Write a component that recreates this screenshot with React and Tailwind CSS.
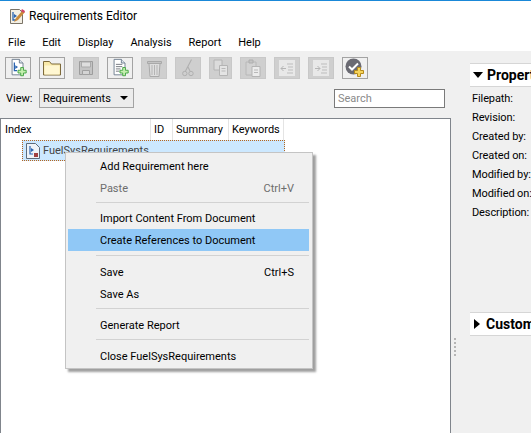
const FONT = { fontFamily: 'Roboto, "Noto Sans", sans-serif' };

function Plus({ color = "#3fa33f", light = "#c6efb0" }) {
  return (
    <g>
      <path d="M14 9.5h3v3h3v3h-3v3h-3v-3h-3v-3h3z" fill={light} stroke={color} strokeWidth="1" />
    </g>
  );
}

function DocBase({ children }) {
  return (
    <svg width="20" height="20" viewBox="0 0 22 20">
      <path d="M4.5 .5h8l4 4v13h-12z" fill="#fff" stroke="#6b7b8c" />
      <path d="M12.5 .5v4h4" fill="#dfe6ee" stroke="#6b7b8c" />
      {children}
    </svg>
  );
}

const IconNewSet = () => (
  <DocBase>
    <path d="M7 4v9h3" fill="none" stroke="#2a64b0" strokeWidth="1.4" />
    <path d="M8 7l3 2-3 2z" fill="#2a64b0" />
    <Plus />
  </DocBase>
);
const IconFolder = () => (
  <svg width="20" height="18" viewBox="0 0 20 18">
    <path d="M1.5 2.5h6l2 2.5h9v11h-17z" fill="#f9e9a8" stroke="#7d6a3c" />
    <path d="M2.5 6.5h15v9h-15z" fill="#fff7d2" />
  </svg>
);
const IconSave = () => (
  <svg width="16" height="16" viewBox="0 0 16 16">
    <path d="M1.5 1.5h13v13h-13z" fill="#c4c4c4" stroke="#9d9d9d" />
    <path d="M3.5 2h9v5h-9z" fill="#dedede" stroke="#aaa" />
    <path d="M4.5 10.5h7v4h-7z" fill="#d4d4d4" stroke="#a0a0a0" />
  </svg>
);
const IconNewReq = () => (
  <DocBase>
    <path d="M6.5 6h7M6.5 8.5h7M6.5 11h5M6.5 13.5h4" stroke="#6d7278" />
    <Plus />
  </DocBase>
);
const IconTrash = () => (
  <svg width="15" height="18" viewBox="0 0 15 18">
    <path d="M.5 2.5h14v2H.5z" fill="#c4c4c4" stroke="#a9a9a9" />
    <path d="M2 4.5h11l-1 13H3z" fill="#dedede" stroke="#a9a9a9" />
    <path d="M5 6v10M7.5 6v10M10 6v10" stroke="#b4b4b4" />
  </svg>
);
const IconCut = () => (
  <svg width="12" height="18" viewBox="0 0 12 18">
    <path d="M9.5 .5L3.5 12M6 8l2 4" stroke="#b0b0b0" strokeWidth="1.1" fill="none" />
    <circle cx="2.8" cy="14.5" r="2.2" fill="none" stroke="#b0b0b0" />
    <circle cx="9" cy="14.5" r="2.2" fill="none" stroke="#b0b0b0" />
  </svg>
);
const IconCopy = () => (
  <svg width="16" height="18" viewBox="0 0 16 18">
    <path d="M1 1h8v10H1z" fill="#dcdcdc" stroke="#b4b4b4" />
    <path d="M6.5 6.5h8v10h-8z" fill="#e4e4e4" stroke="#b4b4b4" />
    <path d="M8.5 9.5h4M8.5 12h4" stroke="#b8b8b8" />
  </svg>
);
const IconPaste = () => (
  <svg width="16" height="18" viewBox="0 0 16 18">
    <path d="M1 3h10v13H1z" fill="#d2d2d2" stroke="#b8b8b8" />
    <path d="M4 1h4v3H4z" fill="#c4c4c4" stroke="#aeaeae" />
    <path d="M7 7.5h8v10H7z" fill="#ececec" stroke="#b4b4b4" />
    <path d="M9 11h4M9 13.5h4" stroke="#b8b8b8" />
  </svg>
);
const IconOutdent = () => (
  <svg width="16" height="16" viewBox="0 0 16 16">
    <path d="M0 0h16v16H0z" fill="#e8e8e8" />
    <path d="M8 4h6M9 7h5M9 10h5M8 13h6" stroke="#bdbdbd" />
    <path d="M7 8.5H2M4.5 6L2 8.5 4.5 11" fill="none" stroke="#b5b5b5" />
  </svg>
);
const IconIndent = () => (
  <svg width="16" height="16" viewBox="0 0 16 16">
    <path d="M0 0h16v16H0z" fill="#e8e8e8" />
    <path d="M8 4h6M9 7h5M9 10h5M8 13h6" stroke="#bdbdbd" />
    <path d="M2 8.5h5M4.5 6L7 8.5 4.5 11" fill="none" stroke="#b5b5b5" />
  </svg>
);
const IconCheck = () => (
  <svg width="20" height="20" viewBox="0 0 20 20">
    <circle cx="8.5" cy="8.5" r="8" fill="#6a6a72" />
    <path d="M4 8.5l3 3 6-6" fill="none" stroke="#fff" strokeWidth="2" />
    <path d="M12.5 9.5h3v3h3v3h-3v3h-3v-3h-3v-3h3z" fill="#f6d45a" stroke="#b58a1c" />
  </svg>
);

function ToolButton({ children, off, w = "w-[26px]" }) {
  return (
    <div
      className={`${w} h-[22px] flex items-center justify-center border ${
        off ? "bg-[#cfcfcf] border-[#c8c8c8]" : "bg-[#f0f0f0] border-[#a3a3a3]"
      }`}
    >
      {children}
    </div>
  );
}

function MenuItem({ label, shortcut, disabled, active }) {
  return (
    <div
      className={`h-[22px] flex items-center justify-between pt-[2px] pl-[32px] pr-[15px] ${
        active ? "bg-[#90c8f6]" : ""
      } ${disabled ? "text-[#6d6d6d]" : "text-black"}`}
    >
      <span>{label}</span>
      {shortcut && <span>{shortcut}</span>}
    </div>
  );
}

const Sep = ({ className = "" }) => <div className={`h-px bg-[#d2d2d2] ml-[28px] ${className}`} />;

export default function App() {
  return (
    <div
      className="relative w-[531px] h-[433px] overflow-hidden bg-white text-[11px] text-black flex flex-col"
      style={FONT}
    >
      <div className="h-px bg-[#1a88d8] shrink-0" />
      <div className="h-[30px] shrink-0 flex items-center pl-[9px] gap-[4px] text-[12px]">
        <svg width="16" height="16" viewBox="0 0 16 16">
          <path d="M1.5 1.5h9l3 3v11h-12z" fill="#f3efe4" stroke="#7b7468" />
          <path d="M4 4v8h3" fill="none" stroke="#2a64b0" strokeWidth="1.3" />
          <path d="M5 6l3 2-3 2z" fill="#2a64b0" />
          <path d="M5 14l2-4 7-8 2 2-7 8z" fill="#c98a3a" />
          <path d="M13 1l3 2-1 2-3-2z" fill="#d2456a" />
        </svg>
        <span>Requirements Editor</span>
      </div>
      <div className="h-[20px] shrink-0 flex items-center pt-[4px] pl-[8px] gap-[17px]">
        <span>File</span>
        <span>Edit</span>
        <span>Display</span>
        <span>Analysis</span>
        <span>Report</span>
        <span>Help</span>
      </div>
      <div className="flex-1 bg-[#f0f0f0] flex min-h-0">
        <div className="w-[451px] shrink-0 flex flex-col">
          <div className="flex gap-2 pl-[5px] pt-[6px]">
            <ToolButton><IconNewSet /></ToolButton>
            <ToolButton><IconFolder /></ToolButton>
            <ToolButton off><IconSave /></ToolButton>
            <ToolButton><IconNewReq /></ToolButton>
            <ToolButton off><IconTrash /></ToolButton>
            <ToolButton off><IconCut /></ToolButton>
            <ToolButton off w="w-[23px]"><IconCopy /></ToolButton>
            <ToolButton off><IconPaste /></ToolButton>
            <ToolButton off><IconOutdent /></ToolButton>
            <ToolButton off><IconIndent /></ToolButton>
            <ToolButton><IconCheck /></ToolButton>
          </div>
          <div className="flex items-center mt-[9px] pl-[6px] h-[20px]">
            <span className="w-[33px] pt-[2px]">View:</span>
            <div className="w-[95px] h-[20px] border border-[#a3a3a3] bg-[#ececec] flex items-center justify-between pl-[3px] pr-[5px]">
              <span className="pt-[2px]">Requirements</span>
              <svg width="8" height="4" viewBox="0 0 8 4"><path d="M0 0h8L4 4z" fill="#000" /></svg>
            </div>
            <div className="ml-[200px] w-[111px] h-[19px] border border-[#7a7a7a] bg-white flex items-center pt-[2px] pl-[3px] text-[#8a8a8a]">
              Search
            </div>
          </div>
          <div className="flex-1 mt-[10px] bg-white border border-[#80858c] border-b-0 w-[451px] min-h-0">
            <div className="flex h-[21px] items-center">
              <div className="w-[149px] pt-[2px] pl-[4px] h-full flex items-center">Index</div>
              <div className="w-[22px] pt-[2px] pl-[3px] h-full flex items-center border-l border-[#e4e4e4]">ID</div>
              <div className="w-[56px] pt-[2px] pl-[3px] h-full flex items-center border-l border-[#e4e4e4]">Summary</div>
              <div className="w-[56px] pt-[2px] pl-[3px] h-full flex items-center border-x border-[#e4e4e4]">Keywords</div>
            </div>
            <div className="ml-[21px] w-[263px] h-[21px] bg-[#cce8ff] border border-dotted border-[#b5651d] flex items-center pl-[3px] gap-[3px] text-[#444]">
              <svg width="14" height="16" viewBox="0 0 14 16">
                <path d="M.5 .5h9l4 4v11H.5z" fill="#eef3f8" stroke="#5b6b7c" />
                <path d="M4 3v8h3" fill="none" stroke="#2a64b0" strokeWidth="1.2" />
                <path d="M5 5l3 2-3 2z" fill="#2a64b0" />
                <path d="M8 10h4v4H8z" fill="#a04040" />
              </svg>
              <span className="pt-[2px]">FuelSysRequirements</span>
            </div>
          </div>
        </div>
        <div className="flex-1 min-w-0 flex">
          <div className="w-[19px] shrink-0 flex items-end pb-[77px] pl-[3px]">
            <div className="w-[3px] h-[18px] border-l-2 border-dotted border-[#b5b5b5]" />
          </div>
          <div className="flex-1 min-w-0 overflow-hidden pt-[12px] flex flex-col whitespace-nowrap">
            <div className="h-[24px] bg-white border-y border-[#d6d6d6] flex items-center pl-[3px] gap-[4px] font-bold text-[14px]">
              <svg width="10" height="6" viewBox="0 0 10 6" className="shrink-0"><path d="M0 0h10L5 6z" fill="#000" /></svg>
              <span>Properties</span>
            </div>
            <div className="pl-[2px] pt-[3px] flex flex-col tracking-[-0.1px]">
              {["Filepath:", "Revision:", "Created by:", "Created on:", "Modified by:", "Modified on:", "Description:"].map((t) => (
                <div key={t} className="h-[19px] flex items-center">{t}</div>
              ))}
            </div>
            <div className="mt-[89px] h-[24px] bg-white border-y border-[#d6d6d6] flex items-center pl-[4px] gap-[6px] font-bold text-[14px]">
              <svg width="6" height="10" viewBox="0 0 6 10" className="shrink-0"><path d="M0 0v10l6-5z" fill="#000" /></svg>
              <span>Custom Attributes</span>
            </div>
          </div>
        </div>
      </div>

      <div className="absolute left-[65px] top-[152px] w-[248px] h-[217px] bg-[#f0f0f0] border border-[#c4c4c4] shadow-[3px_3px_2px_rgba(80,80,80,0.55)] pt-[2px] pl-[2px] pr-[3px]">
        <MenuItem label="Add Requirement here" />
        <MenuItem label="Paste" shortcut="Ctrl+V" disabled />
        <Sep className="mt-[3px] mb-[4px]" />
        <MenuItem label="Import Content From Document" />
        <MenuItem label="Create References to Document" active />
        <Sep className="mt-[4px] mb-[5px]" />
        <MenuItem label="Save" shortcut="Ctrl+S" />
        <MenuItem label="Save As" />
        <Sep className="mt-[3px] mb-[5px]" />
        <MenuItem label="Generate Report" />
        <Sep className="mt-[3px] mb-[5px]" />
        <MenuItem label="Close FuelSysRequirements" />
      </div>
    </div>
  );
}
